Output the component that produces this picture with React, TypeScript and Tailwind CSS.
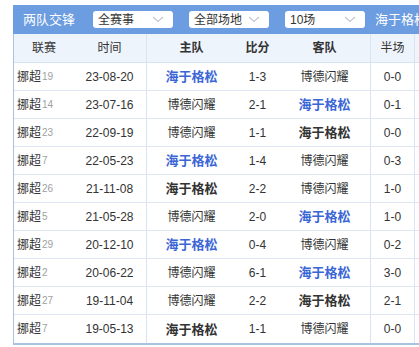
import React from "react";

type Match = {
  league: string;
  round: string;
  date: string;
  home: string;
  homeStyle: "blue" | "dark" | "plain";
  score: string;
  away: string;
  awayStyle: "blue" | "dark" | "plain";
  half: string;
};

const HA = "海于格松";
const BD = "博德闪耀";

const matches: Match[] = [
  { league: "挪超", round: "19", date: "23-08-20", home: HA, homeStyle: "blue", score: "1-3", away: BD, awayStyle: "plain", half: "0-0" },
  { league: "挪超", round: "14", date: "23-07-16", home: BD, homeStyle: "plain", score: "2-1", away: HA, awayStyle: "blue", half: "0-1" },
  { league: "挪超", round: "23", date: "22-09-19", home: BD, homeStyle: "plain", score: "1-1", away: HA, awayStyle: "dark", half: "0-0" },
  { league: "挪超", round: "7", date: "22-05-23", home: HA, homeStyle: "blue", score: "1-4", away: BD, awayStyle: "plain", half: "0-3" },
  { league: "挪超", round: "26", date: "21-11-08", home: HA, homeStyle: "dark", score: "2-2", away: BD, awayStyle: "plain", half: "1-0" },
  { league: "挪超", round: "5", date: "21-05-28", home: BD, homeStyle: "plain", score: "2-0", away: HA, awayStyle: "blue", half: "1-0" },
  { league: "挪超", round: "29", date: "20-12-10", home: HA, homeStyle: "blue", score: "0-4", away: BD, awayStyle: "plain", half: "0-2" },
  { league: "挪超", round: "2", date: "20-06-22", home: BD, homeStyle: "plain", score: "6-1", away: HA, awayStyle: "blue", half: "3-0" },
  { league: "挪超", round: "27", date: "19-11-04", home: BD, homeStyle: "plain", score: "2-2", away: HA, awayStyle: "dark", half: "2-1" },
  { league: "挪超", round: "7", date: "19-05-13", home: HA, homeStyle: "dark", score: "1-1", away: BD, awayStyle: "plain", half: "0-0" },
];

const teamClass = {
  blue: "text-[13px] font-bold text-[#3b66d6]",
  dark: "text-[13px] font-bold text-[#333]",
  plain: "text-[12px] text-[#333]",
};

function Chevron() {
  return (
    <svg width="12" height="7" viewBox="0 0 12 7" fill="none">
      <path d="M1 1l5 4.5L11 1" stroke="#c2c8d2" strokeWidth="1.2" />
    </svg>
  );
}

function Select({ label }: { label: string }) {
  return (
    <div className="flex h-[17px] w-[80px] shrink-0 items-center justify-between rounded-[3px] bg-white pl-[5px] pr-[9px]">
      <span className="text-[12px] leading-none text-[#333]">{label}</span>
      <Chevron />
    </div>
  );
}

export default function App() {
  return (
    <div
      className="h-[347px] w-[419px] overflow-hidden bg-white pl-[13px] pt-[5px]"
      style={{ fontFamily: '"Liberation Sans", "Noto Sans CJK SC", sans-serif' }}
    >
      <div className="w-[470px]">
        {/* top bar */}
        <div className="flex h-[29px] items-center bg-[#6c9de0] pl-[10px]">
          <span className="w-[70px] shrink-0 text-[13px] leading-none text-white">两队交锋</span>
          <div className="flex shrink-0 gap-[16px]">
            <Select label="全赛事" />
            <Select label="全部场地" />
            <Select label="10场" />
          </div>
          <span className="ml-[10px] shrink-0 whitespace-nowrap text-[13px] leading-none text-white">海于格松</span>
        </div>

        <div className="border-b-2 border-l border-[#a9c1e2]">
          {/* header row */}
          <div className="grid h-[29px] grid-cols-[59px_73px_90px_43px_91px_44px_1fr] border-b border-[#d8e4f2] bg-[#eef4fc] text-[12px] leading-none text-[#333]">
            <div className="flex items-center justify-center pl-[1px]">联赛</div>
            <div className="flex items-center justify-center">时间</div>
            <div className="flex items-center justify-center border-l border-[#d8e4f2] font-bold">主队</div>
            <div className="flex items-center justify-center font-bold">比分</div>
            <div className="flex items-center justify-center font-bold">客队</div>
            <div className="flex items-center justify-center border-l border-[#d8e4f2]">半场</div>
            <div className="border-l border-[#d8e4f2]" />
          </div>

          {matches.map((m, i) => (
            <div
              key={i}
              className="grid h-[28px] grid-cols-[59px_73px_90px_43px_91px_44px_1fr] border-b border-[#dde6f1] leading-none text-[#333] last:border-b-0"
            >
              <div className="flex items-center pl-[3px]">
                <span className="text-[12px]">{m.league}</span>
                <span className="ml-[1px] text-[10px] text-[#a0a0a0]">{m.round}</span>
              </div>
              <div className="flex items-center justify-center text-[12px]">{m.date}</div>
              <div className="flex items-center justify-center border-l border-[#d8e4f2]">
                <span className={teamClass[m.homeStyle]}>{m.home}</span>
              </div>
              <div className="flex items-center justify-center text-[12px]">{m.score}</div>
              <div className="flex items-center justify-center">
                <span className={teamClass[m.awayStyle]}>{m.away}</span>
              </div>
              <div className="flex items-center justify-center border-l border-[#d8e4f2] text-[12px]">{m.half}</div>
              <div className="border-l border-[#d8e4f2]" />
            </div>
          ))}
        </div>
      </div>
    </div>
  );
}
